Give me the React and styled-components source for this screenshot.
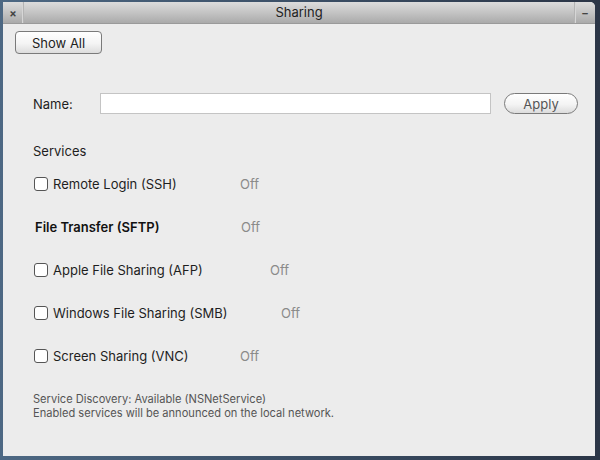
import React from 'react';
import styled, { createGlobalStyle } from 'styled-components';

const GlobalStyle = createGlobalStyle`
  html, body {
    margin: 0;
    padding: 0;
    width: 600px;
    height: 460px;
    overflow: hidden;
    background: linear-gradient(90deg, #4d6883 0%, #3b4f66 50%, #2b3546 100%);
    font-family: Inter, "Noto Sans", "Liberation Sans", sans-serif;
  }
`;

const Desktop = styled.div`
  width: 600px;
  height: 460px;
  padding: 2px 5px 4px 3px;
  box-sizing: border-box;
  display: flex;
`;

const Window = styled.div`
  flex: 1;
  display: flex;
  flex-direction: column;
  background: #ececec;
  border-top-right-radius: 5px;
  overflow: hidden;
`;

const TitleBar = styled.div`
  height: 21px;
  display: flex;
  align-items: stretch;
  background: linear-gradient(#dcdcdc, #c4c4c4 50%, #aaaaaa);
  border-bottom: 1px solid #9a9a9a;
`;

const TitleButton = styled.div`
  width: 20px;
  display: flex;
  align-items: center;
  justify-content: center;
  font-size: 11px;
  font-weight: bold;
  color: #444;
  border-${p => (p.$side === 'left' ? 'right' : 'left')}: 1px solid #b4b4b4;
  box-shadow: ${p => (p.$side === 'left' ? 'inset -1px 0 0 #d6d6d6' : 'inset 1px 0 0 #d6d6d6')};
`;

const Title = styled.div`
  flex: 1;
  text-align: center;
  line-height: 21px;
  font-size: 13px;
  color: #222;
`;

const Content = styled.div`
  flex: 1;
  padding: 7px 12px 0 12px;
  display: flex;
  flex-direction: column;
`;

const PushButton = styled.button`
  font-family: inherit;
  font-size: 13px;
  color: #222;
  height: 23px;
  padding: 0 16px;
  border: 1px solid #7a7a7a;
  border-radius: ${p => (p.$pill ? '11px' : '4px')};
  background: linear-gradient(#ffffff, #f4f4f4 55%, #dcdcdc);
  ${p => p.$pill && 'color: #555; height: 21px; width: 74px; padding: 0;'}
`;

const TopRow = styled.div`
  display: flex;
`;

const NameRow = styled.div`
  margin-top: 39px;
  padding-left: 18px;
  display: flex;
  align-items: center;
`;

const Label = styled.span`
  font-size: 13px;
  color: #1e1e1e;
  width: 67px;
`;

const TextInput = styled.input`
  width: 391px;
  height: 21px;
  box-sizing: border-box;
  border: 1px solid #c4c4c4;
  background: #fff;
  outline: none;
  margin-right: 13px;
`;

const SectionTitle = styled.div`
  margin-top: 29px;
  padding-left: 18px;
  font-size: 13px;
  color: #1e1e1e;
`;

const ServiceList = styled.div`
  margin-top: 3px;
  padding-left: 19px;
  display: flex;
  flex-direction: column;
`;

const ServiceRow = styled.div`
  height: 43px;
  display: flex;
  align-items: center;
`;

const ServiceLabel = styled.label`
  display: flex;
  align-items: center;
  width: ${p => p.$width}px;
  font-size: 13px;
  color: ${p => (p.$bold ? '#111' : '#1e1e1e')};
  font-weight: ${p => (p.$bold ? 600 : 400)};
  padding-left: ${p => (p.$bold ? '1px' : '0')};
`;

const Check = styled.span`
  width: 12px;
  height: 12px;
  border: 1px solid #555;
  border-radius: 3px;
  background: #fff;
  margin-right: 5px;
  flex-shrink: 0;
`;

const Status = styled.span`
  font-size: 13px;
  color: #8a8a8a;
`;

const Footer = styled.div`
  margin-top: 15px;
  padding-left: 18px;
  font-size: 11.1px;
  line-height: 14px;
  color: #555;
`;

const services = [
  { name: 'Remote Login (SSH)', check: true, width: 206 },
  { name: 'File Transfer (SFTP)', check: false, width: 206 },
  { name: 'Apple File Sharing (AFP)', check: true, width: 236 },
  { name: 'Windows File Sharing (SMB)', check: true, width: 247 },
  { name: 'Screen Sharing (VNC)', check: true, width: 206 },
];

export default function App() {
  return (
    <>
      <GlobalStyle />
      <Desktop>
        <Window>
          <TitleBar>
            <TitleButton $side="left">×</TitleButton>
            <Title>Sharing</Title>
            <TitleButton $side="right">–</TitleButton>
          </TitleBar>
          <Content>
            <TopRow>
              <PushButton>Show All</PushButton>
            </TopRow>
            <NameRow>
              <Label>Name:</Label>
              <TextInput />
              <PushButton $pill>Apply</PushButton>
            </NameRow>
            <SectionTitle>Services</SectionTitle>
            <ServiceList>
              {services.map(s => (
                <ServiceRow key={s.name}>
                  <ServiceLabel $bold={!s.check} $width={s.width}>
                    {s.check && <Check />}
                    {s.name}
                  </ServiceLabel>
                  <Status>Off</Status>
                </ServiceRow>
              ))}
            </ServiceList>
            <Footer>
              Service Discovery: Available (NSNetService)
              <br />
              Enabled services will be announced on the local network.
            </Footer>
          </Content>
        </Window>
      </Desktop>
    </>
  );
}
